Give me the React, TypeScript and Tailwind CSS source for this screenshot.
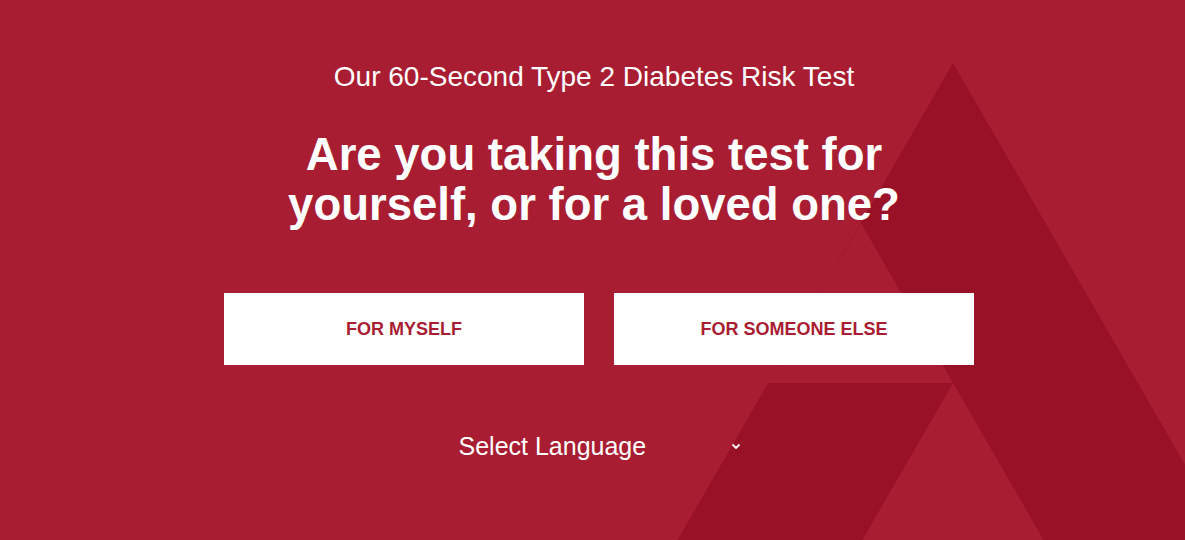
import React from 'react';

// equilateral "A" mark drawn behind the content
function BackgroundMark() {
  const s = 0.5774;
  const ax = 953;
  const ay = 63;
  const H = 700;
  const big = `${ax},${ay} ${ax - s * (H - ay)},${H} ${ax + s * (H - ay)},${H}`;
  const notch = `861,223 768,383 953,383`;
  const hole = `953,383 ${953 - s * (H - 383)},${H} ${953 + s * (H - 383)},${H}`;
  return (
    <svg className="absolute inset-0 pointer-events-none" width="1185" height="540" viewBox="0 0 1185 540">
      <polygon points={big} fill="#981127" />
      <polygon points={notch} fill="#a91d32" />
      <polygon points={hole} fill="#a91d32" />
    </svg>
  );
}

function ChoiceButton({ label }: { label: string }) {
  return (
    <button
      type="button"
      className="w-[360px] h-[72px] bg-white text-[#a91d32] text-[18px] font-bold flex items-center justify-center"
    >
      {label}
    </button>
  );
}

export default function App() {
  return (
    <div
      className="relative h-[540px] overflow-hidden bg-[#a91d32] text-white"
      style={{ fontFamily: '"Liberation Sans", Arial, sans-serif' }}
    >
      <BackgroundMark />
      <div className="relative flex flex-col items-center pt-[62px]">
        <p className="text-[28px] leading-[30px] ml-[3px]">Our 60-Second Type 2 Diabetes Risk Test</p>
        <h1 className="mt-[38px] text-[45.5px] leading-[50px] font-bold text-center ml-[3px]">
          Are you taking this test for
          <br />
          yourself, or for a loved one?
        </h1>
        <div className="mt-[63px] ml-[13px] flex gap-[30px]">
          <ChoiceButton label="FOR MYSELF" />
          <ChoiceButton label="FOR SOMEONE ELSE" />
        </div>
        <div className="mt-[66px] w-[300px] h-[30px] flex items-center justify-between pl-[16px] pr-[2px]">
          <span className="text-[25px] leading-[30px]">Select Language</span>
          <svg width="10" height="7" viewBox="0 0 10 7">
            <path d="M1.5 1.5 L5 5 L8.5 1.5" fill="none" stroke="white" strokeWidth="1.8" />
          </svg>
        </div>
      </div>
    </div>
  );
}
